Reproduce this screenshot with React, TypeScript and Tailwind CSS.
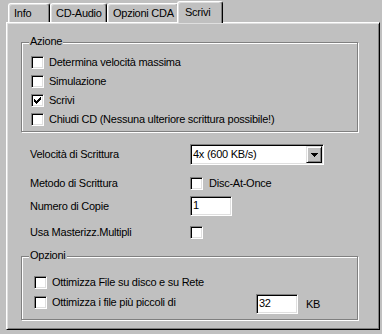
import React from "react";

const sunken =
  "border border-t-[#808080] border-l-[#808080] border-r-white border-b-white shadow-[inset_1px_1px_0_#000,inset_-1px_-1px_0_#dfdfdf]";

function Check() {
  const cols = [2, 3, 4, 3, 2, 1, 0];
  return (
    <svg width="7" height="7" viewBox="0 0 7 7" shapeRendering="crispEdges" className="absolute left-[2px] top-[2px]">
      {cols.map((r, i) => (
        <rect key={i} x={i} y={r} width="1" height="3" fill="#000" />
      ))}
    </svg>
  );
}

function CheckBox({ checked = false }: { checked?: boolean }) {
  return (
    <span className={`relative block w-[13px] h-[13px] shrink-0 bg-white ${sunken}`}>
      {checked && <Check />}
    </span>
  );
}

function Row({ label, checked = false }: { label: string; checked?: boolean }) {
  return (
    <div className="flex items-center h-[13px] gap-[5px]">
      <CheckBox checked={checked} />
      <span className="leading-[13px] whitespace-nowrap">{label}</span>
    </div>
  );
}

function GroupBox({
  label,
  className,
  children,
}: {
  label: string;
  className: string;
  children: React.ReactNode;
}) {
  return (
    <div
      className={`relative border border-[#808080] shadow-[inset_1px_1px_0_#fff,1px_1px_0_#fff] ${className}`}
    >
      <span className="absolute left-[7px] top-[-8px] px-[1px] leading-[13px] bg-[#c0c0c0]">{label}</span>
      {children}
    </div>
  );
}

function Tab({ label, w, selected = false, pl }: { label: string; w: string; selected?: boolean; pl: string }) {
  return (
    <div
      className={`${w} ${pl} ${
        selected
          ? "h-[22px] -mb-[1px] -ml-[2px] relative z-10 pt-[4px]"
          : "h-[19px] pt-[3px]"
      } bg-[#c0c0c0] border-t border-l border-r border-t-white border-l-white border-r-black rounded-t-[3px] shadow-[inset_-1px_0_0_#808080,inset_1px_1px_0_#dfdfdf] leading-[13px] whitespace-nowrap`}
    >
      {label}
    </div>
  );
}

export default function App() {
  return (
    <div
      className="w-[382px] h-[334px] bg-[#c0c0c0] overflow-hidden text-black text-[11px] tracking-[-0.25px]"
      style={{ fontFamily: '"Liberation Sans", Arial, sans-serif' }}
    >
      <div className="h-[22px] flex items-end pl-[8px]">
        <Tab label="Info" w="w-[42px]" pl="pl-[5px]" />
        <Tab label="CD-Audio" w="w-[57px]" pl="pl-[5px]" />
        <Tab label="Opzioni CDA" w="w-[72px]" pl="pl-[5px]" />
        <Tab label="Scrivi" w="w-[46px]" pl="pl-[7px]" selected />
      </div>
      <div className="ml-[6px] w-[374px] h-[308px] border border-t-white border-l-white border-r-black border-b-black shadow-[inset_1px_1px_0_#dfdfdf,inset_-1px_-1px_0_#808080] pl-[14px] pt-[19px]">
        <GroupBox label="Azione" className="w-[337px] h-[90px] pl-[9px] pt-[13px]">
          <div className="flex flex-col gap-[6px]">
            <Row label="Determina velocità massima" />
            <Row label="Simulazione" />
            <Row label="Scrivi" checked />
            <Row label="Chiudi CD (Nessuna ulteriore scrittura possibile!)" />
          </div>
        </GroupBox>

        <div className="pl-[9px]">
          <div className="mt-[12px] flex items-center h-[21px]">
            <span className="w-[160px]">Velocità di Scrittura</span>
            <div className={`w-[134px] h-[21px] bg-white ${sunken} flex p-[1px]`}>
              <span className="flex-1 pl-[1px] leading-[17px] whitespace-nowrap">4x (600 KB/s)</span>
              <span className="w-[16px] h-[17px] bg-[#c0c0c0] border border-t-[#dfdfdf] border-l-[#dfdfdf] border-r-black border-b-black shadow-[inset_1px_1px_0_#fff,inset_-1px_-1px_0_#808080] flex items-center justify-center">
                <svg width="7" height="4" viewBox="0 0 7 4" shapeRendering="crispEdges">
                  <path d="M0 0h7v1h-1v1h-1v1h-1v1h-1v-1h-1v-1h-1v-1h-1z" fill="#000" />
                </svg>
              </span>
            </div>
          </div>
          <div className="mt-[12px] flex items-center h-[13px]">
            <span className="w-[160px]">Metodo di Scrittura</span>
            <CheckBox />
            <span className="ml-[6px]">Disc-At-Once</span>
          </div>
          <div className="mt-[6px] flex items-center h-[20px]">
            <span className="w-[160px]">Numero di Copie</span>
            <div className={`w-[42px] h-[20px] bg-white ${sunken} pl-[2px] leading-[16px]`}>1</div>
          </div>
          <div className="mt-[10px] flex items-center h-[13px]">
            <span className="w-[160px]">Usa Masterizz.Multipli</span>
            <CheckBox />
          </div>
        </div>

        <GroupBox label="Opzioni" className="mt-[17px] w-[337px] h-[64px] pl-[12px] pt-[19px]">
          <Row label="Ottimizza File su disco e su Rete" />
          <div className="mt-[5px] flex h-[20px]">
            <div className="mt-[2px] w-[222px]">
              <Row label="Ottimizza i file più piccoli di" />
            </div>
            <div className={`w-[42px] h-[20px] bg-white ${sunken} pl-[2px] leading-[16px]`}>32</div>
            <span className="ml-[8px] leading-[20px]">KB</span>
          </div>
        </GroupBox>
      </div>
    </div>
  );
}
